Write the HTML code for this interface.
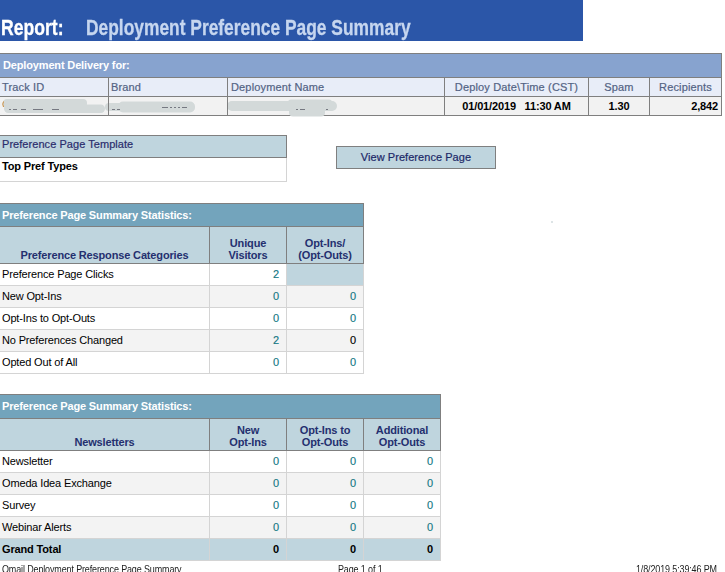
<!DOCTYPE html>
<html><head><meta charset="utf-8">
<style>
*{box-sizing:border-box;margin:0;padding:0}
html,body{width:725px;height:572px;overflow:hidden;background:#fff}
body{position:relative;font-family:"Liberation Sans",sans-serif;font-size:11px;color:#000}
.a{position:absolute}
.t{position:absolute;white-space:nowrap;line-height:13px;font-size:11px;letter-spacing:-0.15px}
.b{font-weight:bold}
</style></head><body>
<div class="a" style="left:0px;top:0px;width:583px;height:41px;background:#2b56a8;"></div>
<div class="t b" style="left:1px;top:16px;color:#ffffff;font-size:22px;line-height:24px;transform-origin:0 0;letter-spacing:0;-webkit-text-stroke:0.3px;transform:scaleX(0.80)">Report:</div>
<div class="t b" style="left:86px;top:16px;color:#c6d6ef;font-size:22px;line-height:24px;transform-origin:0 0;letter-spacing:0;-webkit-text-stroke:0.3px;transform:scaleX(0.79)">Deployment Preference Page Summary</div>
<div class="a" style="left:0px;top:53px;width:722px;height:63px;background:#7f7f7f;"></div>
<div class="a" style="left:0px;top:54px;width:721px;height:23px;background:#87a3cf;"></div>
<div class="a" style="left:0px;top:78px;width:721px;height:18px;background:#e8edf8;"></div>
<div class="a" style="left:0px;top:97px;width:721px;height:18px;background:#f2f2f2;"></div>
<div class="t b" style="left:3px;top:59px;color:#fff;">Deployment Delivery for:</div>
<div class="t" style="left:2px;top:81px;color:#536384;letter-spacing:0.15px;-webkit-text-stroke:0.2px">Track ID</div>
<div class="t" style="left:111px;top:81px;color:#536384;letter-spacing:0.15px;-webkit-text-stroke:0.2px">Brand</div>
<div class="t" style="left:231px;top:81px;color:#536384;letter-spacing:0.15px;-webkit-text-stroke:0.2px">Deployment Name</div>
<div class="t" style="left:445px;top:81px;color:#536384;width:143px;text-align:center;letter-spacing:0.15px;-webkit-text-stroke:0.2px">Deploy Date\Time (CST)</div>
<div class="t" style="left:589px;top:81px;color:#536384;width:60px;text-align:center;letter-spacing:0.15px;-webkit-text-stroke:0.2px">Spam</div>
<div class="t" style="left:650px;top:81px;color:#536384;width:71px;text-align:center;letter-spacing:0.15px;-webkit-text-stroke:0.2px">Recipients</div>
<div class="t b" style="left:445px;top:100px;color:#000;width:143px;text-align:center;">01/01/2019&nbsp;&nbsp; 11:30 AM</div>
<div class="t b" style="left:589px;top:100px;color:#000;width:60px;text-align:center;">1.30</div>
<div class="t b" style="left:650px;top:100px;color:#000;width:68px;text-align:right;">2,842</div>
<svg class="a" style="left:0;top:95px" width="345" height="24" viewBox="0 95 345 24">
<defs><filter id="bl" x="-5%" y="-50%" width="110%" height="200%"><feGaussianBlur stdDeviation="0.7"/></filter></defs>
<g fill="#d3d9d9" filter="url(#bl)">
<rect x="3" y="99" width="84" height="9" rx="4"/>
<rect x="4" y="104.5" width="101" height="8.5" rx="4.2"/>
<rect x="105" y="103" width="40" height="8" rx="4"/>
<rect x="118" y="101.5" width="77" height="11" rx="5"/>
<rect x="227" y="101" width="110" height="10" rx="5"/>
<rect x="288" y="99.5" width="44" height="6" rx="3"/>
<rect x="289" y="108" width="36" height="8.5" rx="4"/>
</g>
<g fill="#2a2a3a" opacity="0.55">
<rect x="9" y="109" width="2" height="1"/><rect x="13" y="109" width="4" height="1"/>
<rect x="21" y="109" width="5" height="1"/><rect x="33" y="109" width="10" height="1"/>
<rect x="52" y="109" width="7" height="1"/>
<rect x="112" y="109" width="3" height="1"/><rect x="117" y="109" width="3" height="1"/>
<rect x="162" y="107" width="6" height="1"/><rect x="170" y="107" width="2" height="1"/>
<rect x="174" y="107" width="2" height="1"/><rect x="178" y="107" width="2" height="1"/><rect x="182" y="107" width="5" height="1"/>
<rect x="296" y="109" width="2" height="1"/><rect x="300" y="109" width="5" height="1"/><rect x="326" y="109" width="2" height="1"/>
</g>
<path d="M3.5 101.5 Q2 104 3.5 107" stroke="#c88a3a" stroke-width="1" fill="none"/>
</svg>
<div class="a" style="left:108px;top:78px;width:1px;height:37px;background:#7f7f7f;"></div>
<div class="a" style="left:227px;top:78px;width:1px;height:37px;background:#7f7f7f;"></div>
<div class="a" style="left:444px;top:78px;width:1px;height:37px;background:#7f7f7f;"></div>
<div class="a" style="left:588px;top:78px;width:1px;height:37px;background:#7f7f7f;"></div>
<div class="a" style="left:649px;top:78px;width:1px;height:37px;background:#7f7f7f;"></div>
<div class="a" style="left:0px;top:135px;width:287px;height:23px;background:#7f7f7f;"></div>
<div class="a" style="left:0px;top:136px;width:286px;height:21px;background:#bfd5de;"></div>
<div class="a" style="left:0px;top:158px;width:287px;height:24px;background:#d4d4d4;"></div>
<div class="a" style="left:0px;top:158px;width:286px;height:23px;background:#fff;"></div>
<div class="t" style="left:2px;top:138px;color:#2a2c6c;letter-spacing:0.05px;-webkit-text-stroke:0.2px">Preference Page Template</div>
<div class="t b" style="left:2px;top:160px;color:#000;">Top Pref Types</div>
<div class="a" style="left:336px;top:146px;width:160px;height:23px;background:#7f7f7f;"></div>
<div class="a" style="left:337px;top:147px;width:158px;height:21px;background:#bfd5de;"></div>
<div class="t" style="left:337px;top:151px;color:#1c2868;width:158px;text-align:center;letter-spacing:0.05px;-webkit-text-stroke:0.2px">View Preference Page</div>
<div class="a" style="left:0px;top:203px;width:364px;height:24px;background:#7f7f7f;"></div>
<div class="a" style="left:0px;top:204px;width:363px;height:22px;background:#73a4bc;"></div>
<div class="t b" style="left:2px;top:209px;color:#fff;">Preference Page Summary Statistics:</div>
<div class="a" style="left:0px;top:226px;width:364px;height:38px;background:#7f7f7f;"></div>
<div class="a" style="left:0px;top:227px;width:363px;height:36px;background:#bfd5de;"></div>
<div class="a" style="left:209px;top:227px;width:1px;height:36px;background:#7f7f7f;"></div>
<div class="a" style="left:286px;top:227px;width:1px;height:36px;background:#7f7f7f;"></div>
<div class="t b" style="left:0px;top:249px;color:#24306f;width:209px;text-align:center;line-height:13px">Preference Response Categories</div>
<div class="t b" style="left:210px;top:237px;color:#24306f;width:76px;text-align:center;line-height:13px">Unique</div>
<div class="t b" style="left:210px;top:249px;color:#24306f;width:76px;text-align:center;line-height:13px">Visitors</div>
<div class="t b" style="left:287px;top:237px;color:#24306f;width:76px;text-align:center;line-height:13px">Opt-Ins/</div>
<div class="t b" style="left:287px;top:249px;color:#24306f;width:76px;text-align:center;line-height:13px">(Opt-Outs)</div>
<div class="a" style="left:0px;top:264px;width:364px;height:110px;background:#d4d4d4;"></div>
<div class="a" style="left:0px;top:264px;width:209px;height:21px;background:#fff;"></div>
<div class="t" style="left:2px;top:268px;color:#000;">Preference Page Clicks</div>
<div class="a" style="left:210px;top:264px;width:76px;height:21px;background:#fff;"></div>
<div class="t" style="left:210px;top:268px;color:#137884;width:69px;text-align:right;-webkit-text-stroke:0.15px">2</div>
<div class="a" style="left:287px;top:264px;width:76px;height:21px;background:#bfd5de;"></div>
<div class="a" style="left:0px;top:286px;width:209px;height:21px;background:#f3f3f3;"></div>
<div class="t" style="left:2px;top:290px;color:#000;">New Opt-Ins</div>
<div class="a" style="left:210px;top:286px;width:76px;height:21px;background:#f3f3f3;"></div>
<div class="t" style="left:210px;top:290px;color:#137884;width:69px;text-align:right;-webkit-text-stroke:0.15px">0</div>
<div class="a" style="left:287px;top:286px;width:76px;height:21px;background:#f3f3f3;"></div>
<div class="t" style="left:287px;top:290px;color:#137884;width:69px;text-align:right;-webkit-text-stroke:0.15px">0</div>
<div class="a" style="left:0px;top:308px;width:209px;height:21px;background:#fff;"></div>
<div class="t" style="left:2px;top:312px;color:#000;">Opt-Ins to Opt-Outs</div>
<div class="a" style="left:210px;top:308px;width:76px;height:21px;background:#fff;"></div>
<div class="t" style="left:210px;top:312px;color:#137884;width:69px;text-align:right;-webkit-text-stroke:0.15px">0</div>
<div class="a" style="left:287px;top:308px;width:76px;height:21px;background:#fff;"></div>
<div class="t" style="left:287px;top:312px;color:#137884;width:69px;text-align:right;-webkit-text-stroke:0.15px">0</div>
<div class="a" style="left:0px;top:330px;width:209px;height:21px;background:#f3f3f3;"></div>
<div class="t" style="left:2px;top:334px;color:#000;">No Preferences Changed</div>
<div class="a" style="left:210px;top:330px;width:76px;height:21px;background:#f3f3f3;"></div>
<div class="t" style="left:210px;top:334px;color:#137884;width:69px;text-align:right;-webkit-text-stroke:0.15px">2</div>
<div class="a" style="left:287px;top:330px;width:76px;height:21px;background:#f3f3f3;"></div>
<div class="t" style="left:287px;top:334px;color:#000;width:69px;text-align:right;-webkit-text-stroke:0.15px">0</div>
<div class="a" style="left:0px;top:352px;width:209px;height:21px;background:#fff;"></div>
<div class="t" style="left:2px;top:356px;color:#000;">Opted Out of All</div>
<div class="a" style="left:210px;top:352px;width:76px;height:21px;background:#fff;"></div>
<div class="t" style="left:210px;top:356px;color:#137884;width:69px;text-align:right;-webkit-text-stroke:0.15px">0</div>
<div class="a" style="left:287px;top:352px;width:76px;height:21px;background:#fff;"></div>
<div class="t" style="left:287px;top:356px;color:#137884;width:69px;text-align:right;-webkit-text-stroke:0.15px">0</div>
<div class="a" style="left:0px;top:394px;width:441px;height:25px;background:#7f7f7f;"></div>
<div class="a" style="left:0px;top:395px;width:440px;height:23px;background:#73a4bc;"></div>
<div class="t b" style="left:2px;top:400px;color:#fff;">Preference Page Summary Statistics:</div>
<div class="a" style="left:0px;top:418px;width:441px;height:33px;background:#7f7f7f;"></div>
<div class="a" style="left:0px;top:419px;width:440px;height:31px;background:#bfd5de;"></div>
<div class="a" style="left:209px;top:419px;width:1px;height:31px;background:#7f7f7f;"></div>
<div class="a" style="left:286px;top:419px;width:1px;height:31px;background:#7f7f7f;"></div>
<div class="a" style="left:363px;top:419px;width:1px;height:31px;background:#7f7f7f;"></div>
<div class="t b" style="left:0px;top:436px;color:#24306f;width:209px;text-align:center;line-height:13px">Newsletters</div>
<div class="t b" style="left:210px;top:424px;color:#24306f;width:76px;text-align:center;line-height:13px">New</div>
<div class="t b" style="left:210px;top:436px;color:#24306f;width:76px;text-align:center;line-height:13px">Opt-Ins</div>
<div class="t b" style="left:287px;top:424px;color:#24306f;width:76px;text-align:center;line-height:13px">Opt-Ins to</div>
<div class="t b" style="left:287px;top:436px;color:#24306f;width:76px;text-align:center;line-height:13px">Opt-Outs</div>
<div class="t b" style="left:364px;top:424px;color:#24306f;width:76px;text-align:center;line-height:13px">Additional</div>
<div class="t b" style="left:364px;top:436px;color:#24306f;width:76px;text-align:center;line-height:13px">Opt-Outs</div>
<div class="a" style="left:0px;top:451px;width:441px;height:110px;background:#d4d4d4;"></div>
<div class="a" style="left:0px;top:451px;width:209px;height:21px;background:#fff;"></div>
<div class="t" style="left:2px;top:455px;color:#000;">Newsletter</div>
<div class="a" style="left:210px;top:451px;width:76px;height:21px;background:#fff;"></div>
<div class="t" style="left:210px;top:455px;color:#137884;width:69px;text-align:right;-webkit-text-stroke:0.15px">0</div>
<div class="a" style="left:287px;top:451px;width:76px;height:21px;background:#fff;"></div>
<div class="t" style="left:287px;top:455px;color:#137884;width:69px;text-align:right;-webkit-text-stroke:0.15px">0</div>
<div class="a" style="left:364px;top:451px;width:76px;height:21px;background:#fff;"></div>
<div class="t" style="left:364px;top:455px;color:#137884;width:69px;text-align:right;-webkit-text-stroke:0.15px">0</div>
<div class="a" style="left:0px;top:473px;width:209px;height:21px;background:#f3f3f3;"></div>
<div class="t" style="left:2px;top:477px;color:#000;">Omeda Idea Exchange</div>
<div class="a" style="left:210px;top:473px;width:76px;height:21px;background:#f3f3f3;"></div>
<div class="t" style="left:210px;top:477px;color:#137884;width:69px;text-align:right;-webkit-text-stroke:0.15px">0</div>
<div class="a" style="left:287px;top:473px;width:76px;height:21px;background:#f3f3f3;"></div>
<div class="t" style="left:287px;top:477px;color:#137884;width:69px;text-align:right;-webkit-text-stroke:0.15px">0</div>
<div class="a" style="left:364px;top:473px;width:76px;height:21px;background:#f3f3f3;"></div>
<div class="t" style="left:364px;top:477px;color:#137884;width:69px;text-align:right;-webkit-text-stroke:0.15px">0</div>
<div class="a" style="left:0px;top:495px;width:209px;height:21px;background:#fff;"></div>
<div class="t" style="left:2px;top:499px;color:#000;">Survey</div>
<div class="a" style="left:210px;top:495px;width:76px;height:21px;background:#fff;"></div>
<div class="t" style="left:210px;top:499px;color:#137884;width:69px;text-align:right;-webkit-text-stroke:0.15px">0</div>
<div class="a" style="left:287px;top:495px;width:76px;height:21px;background:#fff;"></div>
<div class="t" style="left:287px;top:499px;color:#137884;width:69px;text-align:right;-webkit-text-stroke:0.15px">0</div>
<div class="a" style="left:364px;top:495px;width:76px;height:21px;background:#fff;"></div>
<div class="t" style="left:364px;top:499px;color:#137884;width:69px;text-align:right;-webkit-text-stroke:0.15px">0</div>
<div class="a" style="left:0px;top:517px;width:209px;height:21px;background:#f3f3f3;"></div>
<div class="t" style="left:2px;top:521px;color:#000;">Webinar Alerts</div>
<div class="a" style="left:210px;top:517px;width:76px;height:21px;background:#f3f3f3;"></div>
<div class="t" style="left:210px;top:521px;color:#137884;width:69px;text-align:right;-webkit-text-stroke:0.15px">0</div>
<div class="a" style="left:287px;top:517px;width:76px;height:21px;background:#f3f3f3;"></div>
<div class="t" style="left:287px;top:521px;color:#137884;width:69px;text-align:right;-webkit-text-stroke:0.15px">0</div>
<div class="a" style="left:364px;top:517px;width:76px;height:21px;background:#f3f3f3;"></div>
<div class="t" style="left:364px;top:521px;color:#137884;width:69px;text-align:right;-webkit-text-stroke:0.15px">0</div>
<div class="a" style="left:0px;top:539px;width:209px;height:21px;background:#bfd5de;"></div>
<div class="t b" style="left:2px;top:543px;color:#000;">Grand Total</div>
<div class="a" style="left:210px;top:539px;width:76px;height:21px;background:#bfd5de;"></div>
<div class="t b" style="left:210px;top:543px;color:#000;width:69px;text-align:right;">0</div>
<div class="a" style="left:287px;top:539px;width:76px;height:21px;background:#bfd5de;"></div>
<div class="t b" style="left:287px;top:543px;color:#000;width:69px;text-align:right;">0</div>
<div class="a" style="left:364px;top:539px;width:76px;height:21px;background:#bfd5de;"></div>
<div class="t b" style="left:364px;top:543px;color:#000;width:69px;text-align:right;">0</div>
<div class="t" style="left:2px;top:563px;color:#222;font-size:11px;transform:scaleX(0.815);transform-origin:0 0">Omail Deployment Preference Page Summary</div>
<div class="t" style="left:338px;top:563px;color:#222;font-size:11px;transform:scaleX(0.815);transform-origin:0 0">Page 1 of 1</div>
<div class="t" style="left:636px;top:563px;color:#222;font-size:11px;transform:scaleX(0.815);transform-origin:0 0">1/8/2019 5:39:46 PM</div>
<div class="a" style="left:551px;top:221px;width:2px;height:2px;background:#dde4e6;"></div>
</body></html>
